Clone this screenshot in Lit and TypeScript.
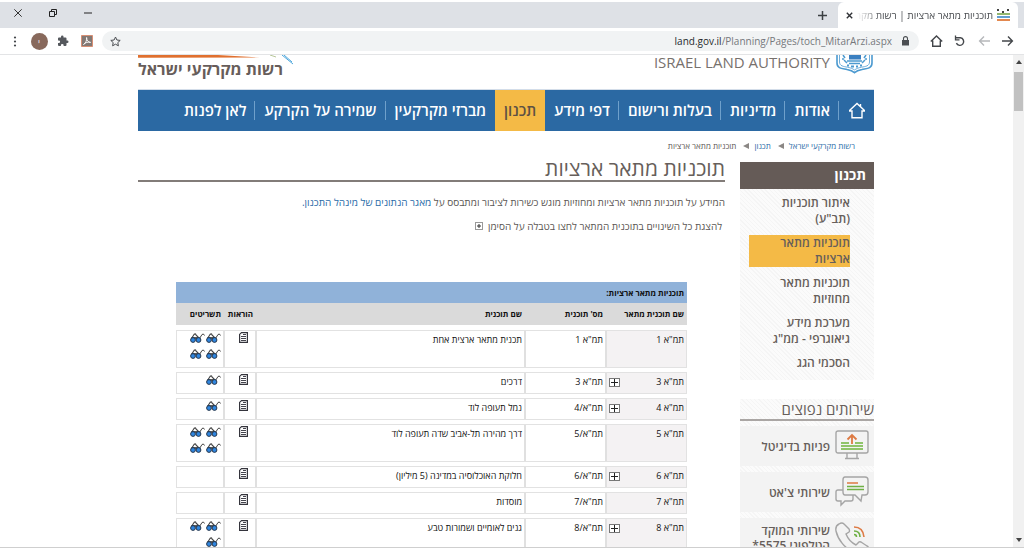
import { LitElement, html, css, svg, nothing } from "lit";
import { customElement } from "lit/decorators.js";
import { classMap } from "lit/directives/class-map.js";

interface Plan {
  group: string;
  number: string;
  name: string;
  sheets: number;
  expandable: boolean;
}

const NAV = ["אודות", "מדיניות", "בעלות ורישום", "דפי מידע", "תכנון", "מברזי מקרקעין", "שמירה על הקרקע", "לאן לפנות"];
const ACTIVE_NAV = "תכנון";

const SIDE = ["איתור תוכניות (תב\"ע)", "תוכניות מתאר ארציות", "תוכניות מתאר מחוזיות", "מערכת מידע גיאוגרפי - ממ\"ג", "הסכמי הגג"];
const ACTIVE_SIDE = "תוכניות מתאר ארציות";

const PLANS: Plan[] = [
  { group: "תמ\"א 1", number: "תמ\"א 1", name: "תכנית מתאר ארצית אחת", sheets: 4, expandable: false },
  { group: "תמ\"א 3", number: "תמ\"א 3", name: "דרכים", sheets: 1, expandable: true },
  { group: "תמ\"א 4", number: "תמ\"א/4", name: "נמל תעופה לוד", sheets: 1, expandable: true },
  { group: "תמ\"א 5", number: "תמ\"א/5", name: "דרך מהירה תל-אביב שדה תעופה לוד", sheets: 4, expandable: false },
  { group: "תמ\"א 6", number: "תמ\"א/6", name: "חלוקת האוכלוסיה במדינה (5 מיליון)", sheets: 0, expandable: true },
  { group: "תמ\"א 7", number: "תמ\"א/7", name: "מוסדות", sheets: 0, expandable: false },
  { group: "תמ\"א 8", number: "תמ\"א/8", name: "גנים לאומיים ושמורות טבע", sheets: 3, expandable: true },
];

const reset = css`
  :host, * { box-sizing: border-box; }
  * { margin: 0; padding: 0; }
  button { border: 0; background: none; font: inherit; color: inherit; display: flex; align-items: center; justify-content: center; }
  a { color: inherit; text-decoration: none; }
  ul, ol { list-style: none; }
  svg { display: block; flex: none; }
`;

@customElement("browser-chrome")
class BrowserChrome extends LitElement {
  static styles = [reset, css`
    :host { display: block; direction: rtl; font-family: "Open Sans", "Noto Sans", sans-serif; color: #4a4d51; }
    .strip { display: flex; align-items: stretch; height: 26px; margin-top: 2px; padding-inline-start: 6px; background: #dee1e6; }
    .tab { display: flex; align-items: center; width: 180px; padding: 0 8px; gap: 4px; background: #fff; border-radius: 6px 6px 0 0; }
    .title { flex: 1; min-width: 0; white-space: nowrap; font-size: 10px; line-height: 16px; mask-image: linear-gradient(to left, #000 82%, transparent); }
    .new { width: 32px; }
    .window { display: flex; margin-inline-start: auto; }
    .window button { width: 35px; height: 22px; }
    .bar { display: flex; align-items: center; height: 27px; padding: 0 4px 0 3px; border-bottom: 1px solid #e3e4e6; background: #fff; }
    .bar > button { width: 24px; height: 24px; }
    .address { flex: 1; display: flex; align-items: center; height: 20px; margin: 0 5px 0 3px; padding: 0 8px; gap: 8px; border-radius: 10px; background: #f1f3f4; }
    .url { flex: 1; direction: ltr; text-align: right; font-size: 10px; line-height: 16px; color: #75787c; white-space: nowrap; }
    .url b { font-weight: 400; color: #27292c; }
    .avatar { width: 17px; height: 17px; border-radius: 50%; background: #88695c; color: #fff; font-size: 8px; line-height: 17px; text-align: center; }
  `];

  render() {
    return html`
      <div class="strip">
        <div class="tab">
          <svg width="13" height="12" viewBox="0 0 13 12"><path d="M0 1h2M5 3h2M10 1h2" stroke="#444" stroke-width="2"/><path d="M0 5h13" stroke="#79a64b" stroke-width="1.6"/><path d="M0 8h13" stroke="#3a87c4" stroke-width="1.6"/><path d="M0 11h13" stroke="#e07b3c" stroke-width="1.8"/></svg>
          <span class="title">תוכניות מתאר ארציות | רשות מקר</span>
          <button aria-label="סגירת כרטיסייה"><svg width="7" height="7" viewBox="0 0 7 7"><path d="M.8.8l5.4 5.4M6.2.8L.8 6.2" stroke="#303236" stroke-width="1.4"/></svg></button>
        </div>
        <button class="new" aria-label="כרטיסייה חדשה"><svg width="9" height="9" viewBox="0 0 9 9"><path d="M4.5 0v9M0 4.5h9" stroke="#3c4043" stroke-width="1.5"/></svg></button>
        <div class="window">
          <button aria-label="מזעור"><svg width="8" height="2" viewBox="0 0 8 2"><path d="M0 1h8" stroke="#333" stroke-width="1.1"/></svg></button>
          <button aria-label="שחזור"><svg width="8" height="8" viewBox="0 0 8 8" fill="none" stroke="#222"><path d="M.5 2.5h5v5h-5zM2.5 2v-1.500h5v5H6"/></svg></button>
          <button aria-label="סגירה"><svg width="8" height="8" viewBox="0 0 8 8"><path d="M.3.3l7.4 7.4M7.7.3L.3 7.7" stroke="#333"/></svg></button>
        </div>
      </div>
      <div class="bar">
        <button aria-label="אחורה"><svg width="12" height="10" viewBox="0 0 12 10" fill="none" stroke="#44474b" stroke-width="1.4"><path d="M0 5h10M6 .6L10.4 5 6 9.4"/></svg></button>
        <button aria-label="קדימה"><svg width="12" height="10" viewBox="0 0 12 10" fill="none" stroke="#b6b8bb" stroke-width="1.4"><path d="M12 5H2M6 .6L1.6 5 6 9.4"/></svg></button>
        <button aria-label="רענון"><svg width="12" height="12" viewBox="0 0 12 12" fill="none" stroke="#44474b" stroke-width="1.4"><path d="M2 2.8H6.4a3.8 3.8 0 1 1-4 5.3"/><path d="M1.500.5v4.300h4" stroke-width="1.3"/></svg></button>
        <button aria-label="דף הבית"><svg width="13" height="12" viewBox="0 0 13 12" fill="none" stroke="#44474b" stroke-width="1.4"><path d="M.8 6.6L6.5 1l5.700 5.600M2.700 5.500v5.700h7.600V5.500"/></svg></button>
        <div class="address">
          <svg width="11" height="10" viewBox="0 0 11 10"><path d="M2 4h7v5.500H2z" fill="#4b4e52"/><path d="M3.500 4V2.600a2 2 0 0 1 4 0V4" fill="none" stroke="#4b4e52" stroke-width="1.1"/></svg>
          <span class="url"><b>land.gov.il</b>/Planning/Pages/toch_MitarArzi.aspx</span>
          <button aria-label="סימניה"><svg width="11" height="11" viewBox="0 0 11 11" fill="none" stroke="#4b4e52"><path d="M5.500 1l1.400 3 3.300.4-2.400 2.200.6 3.200-2.900-1.600-2.900 1.600.6-3.200L.8 4.400 4.100 4z"/></svg></button>
        </div>
        <button aria-label="PDF"><svg width="12" height="12" viewBox="0 0 12 12"><path d="M.5.500h11v11H.5z" fill="#827874" stroke="#d88f74"/><path d="M2.500 9.500C4.500 8.500 6.200 5 5.600 2.500 5.200 5 7.500 7.600 9.600 7.400 7 6.600 4.500 7.500 2.500 9.500z" fill="none" stroke="#fff" stroke-width=".9"/></svg></button>
        <button aria-label="תוספים"><svg width="12" height="12" viewBox="0 0 24 24"><path d="M20.500 11H19V7a2 2 0 0 0-2-2h-4V3.500a2.500 2.500 0 0 0-5 0V5H4a2 2 0 0 0-2 2v3.800h1.500a2.700 2.700 0 0 1 0 5.400H2V20a2 2 0 0 0 2 2h3.800v-1.500a2.700 2.700 0 0 1 5.400 0V22H17a2 2 0 0 0 2-2v-4h1.500a2.500 2.500 0 0 0 0-5z" fill="#55585d"/></svg></button>
        <button aria-label="חשבון"><span class="avatar">י</span></button>
        <button aria-label="תפריט"><svg width="4" height="11" viewBox="0 0 4 11" fill="#44474b"><circle cx="2" cy="1.5" r="1.1"/><circle cx="2" cy="5.5" r="1.1"/><circle cx="2" cy="9.5" r="1.1"/></svg></button>
      </div>`;
  }
}

@customElement("site-header")
class SiteHeader extends LitElement {
  static styles = [reset, css`
    :host { display: block; font-family: "Open Sans", "Noto Sans", sans-serif; }
    .brand { display: flex; justify-content: space-between; height: 35px; border-bottom: 1px solid #d3dde9; }
    .authority { display: flex; gap: 5px; font-size: 15px; line-height: 15px; color: #77716d; }
    .logo { display: flex; flex-direction: column; align-items: flex-end; color: #675d5a; font-size: 16px; line-height: 20px; font-weight: 700; }
    .logo svg { margin-bottom: -6px; }
    .logo span { align-self: stretch; text-align: left; white-space: nowrap; }
    nav { display: flex; align-items: stretch; height: 41px; background: #2b69a3; color: #fff; font-size: 15px; font-weight: 600; }
    nav a { display: flex; align-items: center; white-space: nowrap; }
    .text { padding: 0 8px 0 9px; border-inline-start: 1px solid #6fa0cb; line-height: 19px; }
    .home { padding: 0 9px 0 10px; }
    .active { background: #f4ba46; color: #5d5144; }
    .active .text, .after .text { border-color: transparent; }
  `];

  render() {
    return html`
      <div class="brand">
        <div class="authority">
          <svg width="39" height="19" viewBox="0 0 39 19" fill="none" stroke="#4c9ad0"><path d="M2 0v8c0 6 6 5.500 10 6.500 4 .8 5 1 7.500 3.200 2.500-2.200 3.500-2.400 7.500-3.200 4-1 10-.5 10-6.500V0" stroke-width="1.6"/><path d="M4.500 0v7c0 4 4 4.500 8 5.200 3.500.7 5 1.500 7 2.700 2-1.200 3.500-2 7-2.700 4-.7 8-1.200 8-5.200V0" stroke-width=".8"/><path d="M14 0h12v4.500H14z" fill="#3a7fc0" stroke="none"/><path d="M12 6h15M14 8.500h11M8 0l2 3M9 5l3 3M31 0l-2 3M30 5l-3 3M7 4h2M30 4h2" stroke-width="1.5"/><path d="M12 10.500h2M16 11.500h3M21 11.500h2M25 10.500h2" stroke-width="2"/></svg>
          <span>ISRAEL LAND AUTHORITY</span>
        </div>
        <div class="logo">
          <svg width="156" height="10" viewBox="0 0 156 10"><path d="M0 0h80L122 2.600 0 2.800z" fill="#e0702f"/><path d="M132 0l6 2" stroke="#b7c79a"/><path d="M144 0l11 9M146 0l8 7" stroke="#4ea7dc"/></svg>
          <span>רשות מקרקעי ישראל</span>
        </div>
      </div>
      <nav>
        <a class="home" href="#home" aria-label="דף הבית"><svg width="16" height="17" viewBox="0 0 16 17" fill="none" stroke="#fff" stroke-width="1.4"><path d="M0 9h3v6.800h10V9h3L8 1.500zM11.500 4.500V2"/></svg></a>
        ${NAV.map((label, i) => html`<a href="#nav-${i}" class=${classMap({ active: label === ACTIVE_NAV, after: NAV[i - 1] === ACTIVE_NAV })}><span class="text">${label}</span></a>`)}
      </nav>`;
  }
}

@customElement("side-panel")
class SidePanel extends LitElement {
  static styles = [reset, css`
    :host { display: block; font-family: "Open Sans", "Noto Sans", sans-serif; color: #675f5b; }
    h2 { height: 27px; padding: 0 8px; background: #655b57; color: #fff; font-size: 14px; line-height: 26px; font-weight: 700; }
    .hatch { background: repeating-linear-gradient(45deg, #fbfbfb 0 2px, #f5f5f5 2px 3px); }
    .menu { display: flex; flex-direction: column; gap: 8px; padding: 6px 24px 9px 9px; font-size: 12px; line-height: 16px; font-weight: 600; }
    .menu a { display: block; }
    .menu .active { background: #f4ba46; }
    .services { margin-top: 19px; }
    h3 { height: 22px; border-bottom: 2px solid #aaa6a4; font-size: 15px; line-height: 20px; font-weight: 400; }
    .cards { display: flex; flex-direction: column; gap: 6px; padding-top: 5px; }
    .cards a { display: flex; align-items: center; gap: 5px; min-height: 40px; padding: 0 5px; background: #f3f3f3; font-size: 12px; line-height: 15px; font-weight: 600; }
    .cards span { white-space: pre-line; }
  `];

  render() {
    const screen = svg`<rect x="1" y="1" width="32" height="22" rx="2"/><path d="M12 23v5M22 23v5M10 28.500h14"/><path d="M6 13h8M20 13h8M6 16h22M6 19h22" stroke="#8fc46a" stroke-width="1.8"/><path d="M17 14V6M12.500 9.500L17 5l4.500 4.500" stroke="#dd7a43" stroke-width="1.8"/>`;
    const chat = svg`<path d="M10 1h20q3 0 3 3v12q0 3-3 3h-3l-1 6-6-6H10q-2 0-2-3V4q0-3 2-3z"/><path d="M8 14H3q-2 0-2 2v7q0 2 2 2h3v4l4-4h6q2 0 2-2v-4"/><path d="M12 7h11" stroke="#dd7a43" stroke-width="1.5"/><path d="M12 10.500h17M12 13.500h17" stroke="#6fb045" stroke-width="1.5"/>`;
    const phone = svg`<path d="M4 2Q0 4 1 9c2 9 9 17 17 21q6 3 11 1l4-4q1-2-1-3l-6-4q-2-1-3 1l-2 2c-4-2-8-6-10-11l3-2q1-1 0-3L9 2Q7 0 4 2z"/><path d="M19 5q9 0 10 10" stroke="#dd7a43" stroke-width="1.6"/><path d="M19 9q6 0 6 6M19 12.500q2.500 0 2.500 2.500" stroke="#6fb045" stroke-width="1.6"/>`;
    const cards = [["פניות בדיגיטל", screen], ["שירותי צ'אט", chat], ["שירותי המוקד\nהטלפוני 5575*", phone]] as const;
    return html`
      <h2>תכנון</h2>
      <ul class="menu hatch">
        ${SIDE.map((label, i) => html`<li><a href="#side-${i}" class=${classMap({ active: label === ACTIVE_SIDE })}>${label}</a></li>`)}
      </ul>
      <section class="services hatch">
        <h3>שירותים נפוצים</h3>
        <div class="cards">
          ${cards.map(([label, icon], i) => html`<a href="#service-${i}"><svg width="34" height="32" viewBox="0 0 34 32" fill="none" stroke="#a5a5a5" stroke-width="1.4">${icon}</svg><span>${label}</span></a>`)}
        </div>
      </section>`;
  }
}

@customElement("plans-table")
class PlansTable extends LitElement {
  static styles = [reset, css`
    :host { display: block; font-family: "Open Sans", "Noto Sans", sans-serif; font-size: 9px; line-height: 16px; color: #111; }
    table { display: block; }
    caption { display: block; height: 21px; padding: 0 3px; background: #90b2d9; font-weight: 700; font-size: 8px; line-height: 21px; text-align: start; }
    thead { display: block; margin-bottom: 5px; padding: 0 1px; background: #dadada; }
    tbody { display: flex; flex-direction: column; gap: 4px; }
    tr { display: grid; grid-template-columns: 81px 81px 1fr 32px 46px; }
    th { padding: 0 2px; font-size: 8px; line-height: 22px; text-align: start; white-space: nowrap; }
    tbody tr { border: 1px solid #e2e2e2; min-height: 22px; }
    td { padding: 1px 2px 0; border-inline-end: 2px solid #e0e0e0; text-align: start; }
    td:last-child { border: 0; }
    .group { display: flex; justify-content: space-between; align-items: start; background: #f4f2f3; }
    .plus { width: 11px; height: 9px; margin-top: 4px; border: 1px solid #777; background: #fff; }
    .doc { padding-inline-start: 7px; }
    .sheets { display: flex; flex-wrap: wrap; align-content: start; gap: 4px 1px; padding-bottom: 7px; }
  `];

  private glasses() {
    return html`<a href="#sheet" aria-label="תשריט"><svg width="15" height="12" viewBox="0 0 15 12" fill="none"><path d="M1.500 6.500L4 2.500q1.500-1.500 2 .5L9 6" stroke="#444" stroke-width="1.1"/><path d="M9.500 6.500l2.500-4q1.500-1.500 2.500 1" stroke="#444"/><path d="M1.500 6h8" stroke="#222" stroke-width="1.5"/><circle cx="3" cy="8" r="2.4" fill="#2f86e0" stroke="#26374d"/><circle cx="8.500" cy="8" r="2.400" fill="#2f86e0" stroke="#26374d"/></svg></a>`;
  }

  render() {
    return html`
      <table>
        <caption>תוכניות מתאר ארציות:</caption>
        <thead><tr><th>שם תוכנית מתאר</th><th>מס' תוכנית</th><th>שם תוכנית</th><th>הוראות</th><th>תשריטים</th></tr></thead>
        <tbody>
          ${PLANS.map((p) => html`<tr>
            <td class="group"><span>${p.group}</span>${p.expandable ? html`<button class="plus" aria-label="הצגת שינויים"><svg width="7" height="7" viewBox="0 0 7 7"><path d="M3.500 0v7M0 3.500h7" stroke="#222"/></svg></button>` : nothing}</td>
            <td>${p.number}</td>
            <td>${p.name}</td>
            <td class="doc"><a href="#doc" aria-label="הוראות"><svg width="9" height="11" viewBox="0 0 9 11"><path d="M2.500.600h5.900v9.800H.6v-8z" fill="#fff" stroke="#34343c" stroke-width="1.2"/><path d="M2 4.500h5M2 6.500h5M2 8.500h5M4 2.500h3" stroke="#44444d"/></svg></a></td>
            <td class="sheets">${Array.from({ length: p.sheets }, () => this.glasses())}</td>
          </tr>`)}
        </tbody>
      </table>`;
  }
}

@customElement("app-root")
class AppRoot extends LitElement {
  static styles = [reset, css`
    :host { display: flex; flex-direction: column; height: 100vh; padding-bottom: 7px; background: #fff; direction: rtl; overflow: hidden; }
    .view { flex: 1; min-height: 0; display: flex; border-bottom: 1px solid #cfcfcf; }
    .scroll { display: flex; flex-direction: column; align-items: center; width: 11px; padding: 5px 0; background: #f1f1f1; }
    .thumb { width: 9px; height: 39px; margin: 8px 0 auto; background: #c1c1c1; }
    .page { flex: 1; min-width: 0; overflow: hidden; padding: 0 17px 0 16px; }
    .wrap { max-width: 736px; margin: 0 auto; }
    .crumbs { display: flex; align-items: center; gap: 7px; height: 31px; padding: 0 19px 2px; font: 8px/12px "Open Sans", "Noto Sans", sans-serif; color: #5c5754; }
    .crumbs li { display: flex; align-items: center; gap: 5px; }
    .crumbs a, .intro a { color: #2a6ba8; }
    .columns { display: grid; grid-template-columns: 134px 1fr; gap: 15px; }
    h1 { height: 20px; border-bottom: 2px solid #827c79; color: #675f5b; font: 400 21px/12px "Open Sans", "Noto Sans", sans-serif; }
    .intro { padding-top: 12px; font: 10px/16px "Open Sans", "Noto Sans", sans-serif; color: #5c5754; }
    .hint { display: flex; align-items: center; gap: 5px; padding: 8px 3px 0; }
    .hint button { width: 8px; height: 8px; border: 1px solid #999; }
    .plans { margin: 48px 38px 0; }
  `];

  render() {
    const arrow = html`<svg width="6" height="6" viewBox="0 0 6 6"><path d="M0 3l6-3v6z" fill="#8b8785"/></svg>`;
    return html`
      <browser-chrome></browser-chrome>
      <div class="view">
        <div class="scroll" aria-hidden="true">
          <svg width="6" height="4" viewBox="0 0 6 4"><path d="M0 4l3-4 3 4z" fill="#444"/></svg>
          <div class="thumb"></div>
          <svg width="6" height="4" viewBox="0 0 6 4"><path d="M0 0l3 4 3-4z" fill="#444"/></svg>
        </div>
        <div class="page">
          <div class="wrap">
            <site-header></site-header>
            <ol class="crumbs">
              <li><a href="#root">רשות מקרקעי ישראל</a>${arrow}</li>
              <li><a href="#planning">תכנון</a>${arrow}</li>
              <li>תוכניות מתאר ארציות</li>
            </ol>
            <div class="columns">
              <side-panel></side-panel>
              <main>
                <h1>תוכניות מתאר ארציות</h1>
                <div class="intro">
                  <p>המידע על תוכניות מתאר ארציות ומחוזיות מוגש כשירות לציבור ומתבסס על <a href="#data">מאגר הנתונים של מינהל התכנון.</a></p>
                  <p class="hint">להצגת כל השינויים בתוכנית המתאר לחצו בטבלה על הסימן <button aria-label="הצגת שינויים"><svg width="6" height="6" viewBox="0 0 6 6"><path d="M3 1v4M1 3h4" stroke="#333"/></svg></button></p>
                </div>
                <plans-table class="plans"></plans-table>
              </main>
            </div>
          </div>
        </div>
      </div>`;
  }
}
